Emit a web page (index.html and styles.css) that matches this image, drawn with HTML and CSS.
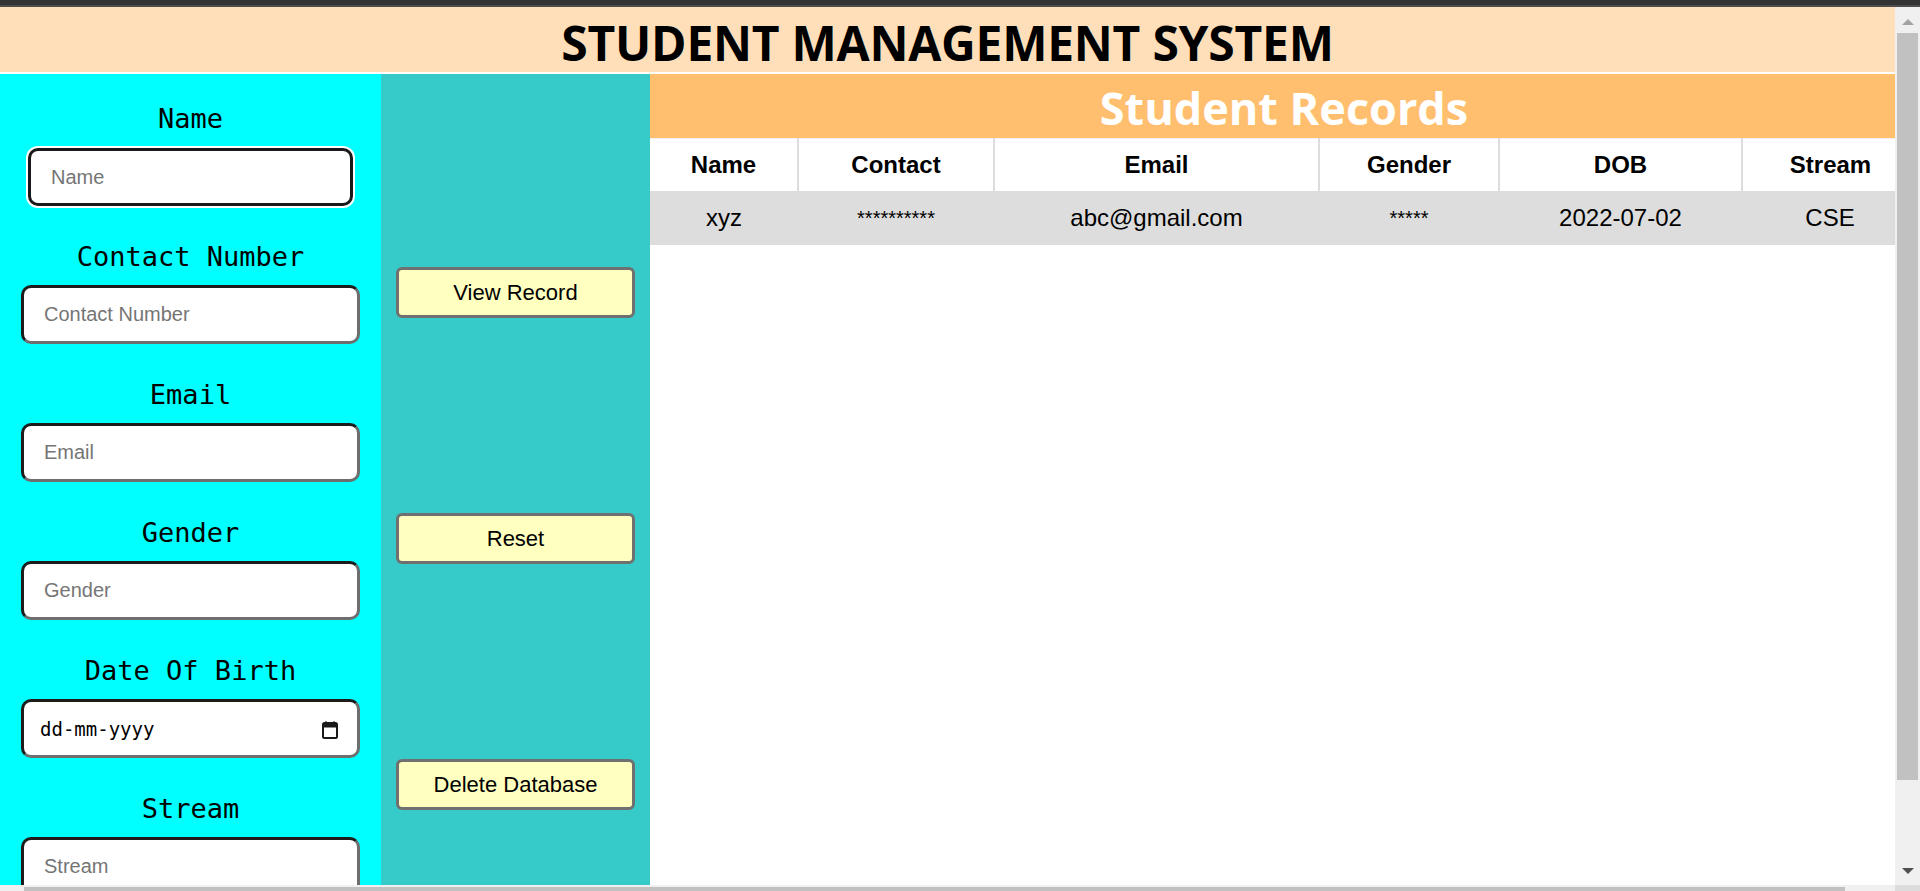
FILE: index.html
```html
<!DOCTYPE html>
<html lang="en">
<head>
<meta charset="utf-8">
<title>Student Management System</title>
<link rel="stylesheet" href="styles.css">
</head>
<body>
<div class="topbar"></div>
<div class="page">
  <header class="banner">
    <h1 class="banner-title">STUDENT MANAGEMENT SYSTEM</h1>
  </header>
  <main class="main">
    <section class="form-col">
      <div class="field">
        <label class="field-label">Name</label>
        <input class="field-input is-focused" type="text" placeholder="Name">
      </div>
      <div class="field">
        <label class="field-label">Contact Number</label>
        <input class="field-input" type="text" placeholder="Contact Number">
      </div>
      <div class="field">
        <label class="field-label">Email</label>
        <input class="field-input" type="text" placeholder="Email">
      </div>
      <div class="field">
        <label class="field-label">Gender</label>
        <input class="field-input" type="text" placeholder="Gender">
      </div>
      <div class="field">
        <label class="field-label">Date Of Birth</label>
        <div class="field-input date-input">
          <span class="date-text">dd-mm-yyyy</span>
          <svg class="cal-icon" width="16" height="18" viewBox="0 0 16 18">
            <rect x="3" y="0.5" width="2" height="3" fill="#1a1a1a"/>
            <rect x="11" y="0.5" width="2" height="3" fill="#1a1a1a"/>
            <rect x="1" y="2" width="14" height="15" rx="1.5" fill="none" stroke="#1a1a1a" stroke-width="2"/>
            <rect x="1" y="2" width="14" height="4.5" fill="#1a1a1a"/>
          </svg>
        </div>
      </div>
      <div class="field">
        <label class="field-label">Stream</label>
        <input class="field-input" type="text" placeholder="Stream">
      </div>
    </section>
    <section class="action-col">
      <button class="action-btn" type="button">View Record</button>
      <button class="action-btn" type="button">Reset</button>
      <button class="action-btn" type="button">Delete Database</button>
    </section>
    <section class="records-col">
      <h2 class="records-title">Student Records</h2>
      <table class="records-table">
        <colgroup>
          <col class="c-name"><col class="c-contact"><col class="c-email"><col class="c-gender"><col class="c-dob"><col class="c-stream">
        </colgroup>
        <thead>
          <tr>
            <th>Name</th><th>Contact</th><th>Email</th><th>Gender</th><th>DOB</th><th>Stream</th>
          </tr>
        </thead>
        <tbody>
          <tr>
            <td>xyz</td><td class="masked">**********</td><td>abc@gmail.com</td><td class="masked">*****</td><td>2022-07-02</td><td>CSE</td>
          </tr>
        </tbody>
      </table>
    </section>
  </main>
</div>
<div class="vscroll">
  <div class="vs-up"></div>
  <div class="vs-thumb"></div>
  <div class="vs-down"></div>
</div>
<div class="hscroll">
  <div class="hs-thumb"></div>
</div>
<div class="scroll-corner"></div>
</body>
</html>
```
FILE: styles.css
```css
html, body {
  margin: 0;
  padding: 0;
  overflow: hidden;
  height: 100%;
  background: #fff;
}

.topbar {
  height: 5px;
  background: #333333;
  border-bottom: 2px solid #4d4d4d;
}

.page {
  width: 1895px;
}

.banner {
  height: 65px;
  background: #ffdfba;
  border-bottom: 2px solid #ffffff;
  display: flex;
  align-items: center;
  justify-content: center;
}

.banner-title {
  margin: 0;
  padding-top: 6px;
  font-family: "Open Sans", sans-serif;
  font-weight: 700;
  font-size: 48px;
  line-height: 1;
  letter-spacing: -0.25px;
  color: #000;
}

.main {
  display: flex;
  width: 1918px;
  height: 830px;
}

/* left form column */
.form-col {
  width: 381px;
  flex: none;
  background: #00ffff;
  padding-top: 29px;
  display: flex;
  flex-direction: column;
  align-items: center;
  box-sizing: border-box;
}

.field {
  display: flex;
  flex-direction: column;
  align-items: center;
  margin-bottom: 35px;
}

.field-label {
  font-family: "DejaVu Sans Mono", monospace;
  font-size: 27px;
  line-height: 32px;
  height: 32px;
  color: #000;
  margin-bottom: 12px;
}

.field-input {
  box-sizing: border-box;
  width: 339px;
  height: 59px;
  border: 3px solid;
  border-color: #1c1c1c #6e6e6e #6e6e6e #1c1c1c;
  border-radius: 10px;
  background: #fff;
  padding: 0 0 0 20px;
  font-family: "Liberation Sans", Arial, sans-serif;
  font-size: 20px;
  color: #000;
  outline: none;
}

.field-input::placeholder {
  color: #757575;
}

.field-input.is-focused {
  width: 325px;
  height: 58px;
  border-color: #1a1a1a;
  box-shadow: 0 0 0 2px #ffffff;
  margin-top: 1px;
}

.date-input {
  display: flex;
  align-items: center;
  justify-content: space-between;
  padding: 0 19px 0 16px;
}

.date-text {
  font-family: "DejaVu Sans Mono", monospace;
  font-size: 19px;
  color: #000;
}

.cal-icon {
  display: block;
  margin-top: 2px;
}

/* middle button column */
.action-col {
  width: 269px;
  flex: none;
  background: #36cbc9;
  display: flex;
  flex-direction: column;
  align-items: center;
  padding-top: 193px;
  gap: 195px;
  box-sizing: border-box;
}

.action-btn {
  width: 239px;
  height: 51px;
  background: #ffffc0;
  border: 3px solid #707070;
  border-radius: 6px;
  font-family: "Liberation Sans", Arial, sans-serif;
  font-size: 22px;
  color: #000;
  padding: 0;
  margin: 0;
}

/* records column */
.records-col {
  width: 1268px;
  flex: none;
  background: #fff;
}

.records-title {
  margin: 0;
  box-sizing: border-box;
  height: 64px;
  padding-top: 3px;
  background: #ffbf6f;
  color: #fff;
  font-family: "Open Sans", sans-serif;
  font-weight: 700;
  font-size: 45px;
  line-height: 61px;
  text-align: center;
  letter-spacing: 0;
}

.records-table {
  width: 1268px;
  border-collapse: collapse;
  table-layout: fixed;
  font-family: "Liberation Sans", Arial, sans-serif;
  font-size: 24px;
  color: #000;
  border-top: 1px solid #f0f0f0;
}

.c-name { width: 148px; }
.c-contact { width: 196px; }
.c-email { width: 325px; }
.c-gender { width: 180px; }
.c-dob { width: 243px; }
.c-stream { width: 176px; }

.records-table th {
  height: 52px;
  padding: 0;
  font-weight: 700;
  text-align: center;
  border-right: 2px solid #dddddd;
}

.records-table th:last-child {
  border-right: none;
}

.records-table td {
  height: 54px;
  padding: 0;
  text-align: center;
  background: #dddddd;
}

.records-table td.masked {
  font-size: 20px;
}

/* simulated browser scrollbars (overlay) */
.vscroll {
  position: fixed;
  top: 7px;
  right: 0;
  width: 25px;
  height: 878px;
  background: #f0f0f0;
}

.vs-up {
  position: absolute;
  top: 12px;
  left: 7px;
  width: 0;
  height: 0;
  border-left: 6px solid transparent;
  border-right: 6px solid transparent;
  border-bottom: 6px solid #a3a3a3;
}

.vs-thumb {
  position: absolute;
  top: 26px;
  left: 2px;
  width: 21px;
  height: 747px;
  background: #c1c1c1;
}

.vs-down {
  position: absolute;
  top: 861px;
  left: 7px;
  width: 0;
  height: 0;
  border-left: 6px solid transparent;
  border-right: 6px solid transparent;
  border-top: 6px solid #505050;
}

.hscroll {
  position: fixed;
  left: 0;
  bottom: 0;
  width: 1895px;
  height: 6px;
  background: #f0f0f0;
}

.hs-thumb {
  position: absolute;
  left: 24px;
  top: 2px;
  width: 1821px;
  height: 4px;
  background: #c1c1c1;
}

.scroll-corner {
  position: fixed;
  right: 0;
  bottom: 0;
  width: 25px;
  height: 6px;
  background: #dcdcdc;
}
```
